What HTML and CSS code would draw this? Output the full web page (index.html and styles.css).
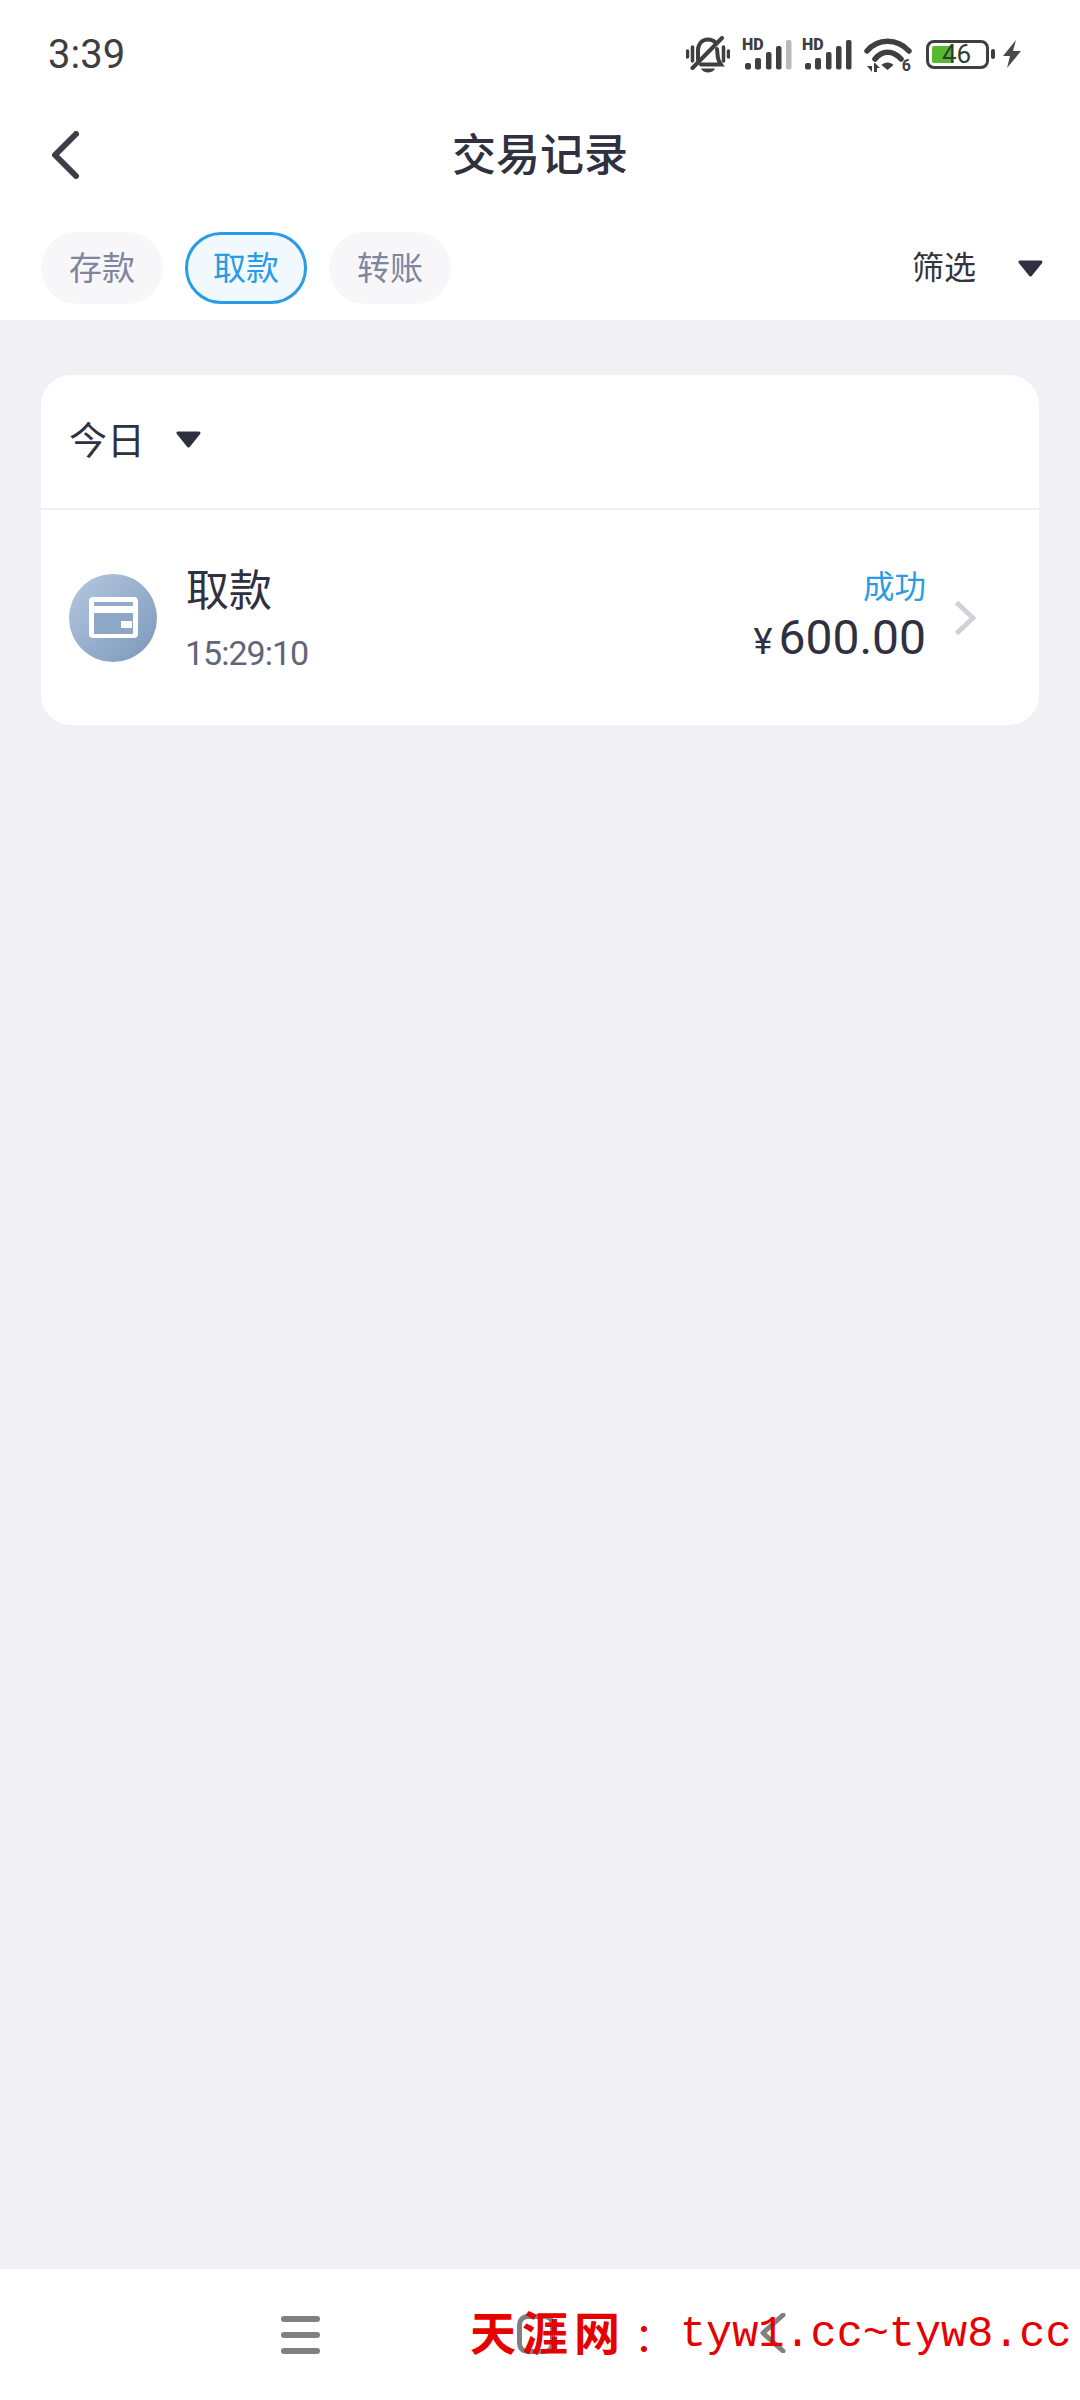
FILE: index.html
```html
<!DOCTYPE html>
<html lang="zh-CN">
<head>
    <meta charset="UTF-8">
    <meta name="viewport" content="width=device-width, initial-scale=1.0">
    <title>交易记录</title>
    <link rel="stylesheet" href="styles.css">
</head>
<body>
    <div class="page">
        <div class="status-bar">
            <span class="clock">3:39</span>
            <div class="status-icons">
                <svg class="ic-bell" width="44" height="37" viewBox="0 0 44 37">
                    <g fill="none" stroke="#3f3f3f" stroke-linecap="round">
                        <path d="M1.500 15v6M6.500 11v14M42.500 15v6M37.500 11v14" stroke-width="3.500"/>
                        <path d="M12 24V14C12 8 16 3.500 22 3.500c3 0 5.500 1 7.500 3M31 13c.5 3 .5 7 1 9 .5 3 2 5 3 6.500H15" stroke-width="4"/>
                        <path d="M6.500 32 36 2" stroke-width="4"/>
                    </g>
                    <path d="M15 32.500h14c-1 2.500-4 4-7 4s-6-1.500-7-4z" fill="#3f3f3f"/>
                </svg>
                <div class="signal">
                    <span class="hd">HD</span>
                    <svg width="50" height="32" viewBox="0 0 50 32">
                        <g fill="#3f3f3f">
                            <rect x="3" y="25" width="6" height="6.500" rx="2"/>
                            <rect x="13" y="20" width="6" height="11.500" rx="2"/>
                            <rect x="24" y="14" width="5.500" height="17.500" rx="2"/>
                            <rect x="34" y="8" width="5.500" height="23.500" rx="2"/>
                        </g>
                        <rect x="44" y="2" width="5.500" height="29.500" rx="2" fill="#b9b9b9"/>
                    </svg>
                </div>
                <div class="signal">
                    <span class="hd">HD</span>
                    <svg width="50" height="32" viewBox="0 0 50 32">
                        <g fill="#3f3f3f">
                            <rect x="3" y="25" width="6" height="6.500" rx="2"/>
                            <rect x="13" y="20" width="6" height="11.500" rx="2"/>
                            <rect x="24" y="14" width="5.500" height="17.500" rx="2"/>
                            <rect x="34" y="8" width="5.500" height="23.500" rx="2"/>
                            <rect x="44" y="2" width="5.500" height="29.500" rx="2"/>
                        </g>
                    </svg>
                </div>
                <div class="wifi">
                    <svg width="48" height="35" viewBox="0 0 48 35">
                        <g fill="none" stroke="#3f3f3f" stroke-width="5.500" stroke-linecap="round">
                            <path d="M3 14C14 1 33 1 45 14"/>
                            <path d="M11 22C18 13 29 13 37 22"/>
                        </g>
                        <path d="M17.500 28c3-3.500 9-3.500 12 0l-6 5z" fill="#3f3f3f"/>
                        <path d="M2 29h6v-3l0 9-5-6zM11 26l5 5h-3v4h-3v-9z" fill="#3f3f3f"/>
                    </svg>
                    <span class="wifi-six">6</span>
                </div>
                <div class="battery">
                    <div class="battery-box">
                        <div class="battery-fill"></div>
                        <span class="battery-num">46</span>
                    </div>
                    <div class="battery-nub"></div>
                </div>
                <svg class="ic-bolt" width="18" height="28" viewBox="0 0 18 28">
                    <path d="M13 0 0 16h7L4 28 18 11h-8z" fill="#4a4a4a"/>
                </svg>
            </div>
        </div>

        <div class="nav-bar">
            <svg class="back" width="28" height="48" viewBox="0 0 28 48">
                <path d="M25 3 4 24l21 21" fill="none" stroke="#3b3e49" stroke-width="6" stroke-linecap="round" stroke-linejoin="round"/>
            </svg>
            <h1 class="nav-title">交易记录</h1>
        </div>

        <div class="tabs">
            <span class="tab">存款</span>
            <span class="tab tab-active">取款</span>
            <span class="tab">转账</span>
            <div class="filter">
                <span>筛选</span>
                <svg class="caret" width="25" height="17" viewBox="0 0 25 17">
                    <path d="M2 2h21l-10.500 13z" fill="#2f3040" stroke="#2f3040" stroke-width="3" stroke-linejoin="round"/>
                </svg>
            </div>
        </div>

        <div class="content">
            <div class="card">
                <div class="card-head">
                    <span>今日</span>
                    <svg class="caret" width="25" height="17" viewBox="0 0 25 17">
                        <path d="M2 2h21l-10.500 13z" fill="#2f3040" stroke="#2f3040" stroke-width="3" stroke-linejoin="round"/>
                    </svg>
                </div>
                <div class="record">
                    <div class="avatar">
                        <svg width="49" height="41" viewBox="0 0 49 41">
                            <rect width="49" height="41" rx="4" fill="#fff"/>
                            <rect x="5" y="5" width="39" height="4" fill="#93abc9"/>
                            <rect x="5" y="16" width="39" height="21" fill="#8ea7c7"/>
                            <rect x="32" y="24" width="11" height="7" fill="#fff"/>
                        </svg>
                    </div>
                    <div class="record-info">
                        <div class="record-name">取款</div>
                        <div class="record-time">15:29:10</div>
                    </div>
                    <div class="record-right">
                        <div class="record-state">成功</div>
                        <div class="record-amount"><span class="yen">¥</span>600.00</div>
                    </div>
                    <svg class="chevron" width="22" height="36" viewBox="0 0 22 36">
                        <path d="M2.500 2.500 19 18 2.500 33.500" fill="none" stroke="#d0d1dc" stroke-width="5"/>
                    </svg>
                </div>
            </div>
        </div>

        <div class="bottom-nav">
            <svg class="nav-menu" width="40" height="38" viewBox="0 0 40 38">
                <g fill="#808080">
                    <rect x="0" y="0" width="39" height="6" rx="3"/>
                    <rect x="0" y="16" width="39" height="6" rx="3"/>
                    <rect x="0" y="32" width="39" height="6" rx="3"/>
                </g>
            </svg>
            <svg class="nav-home" width="38" height="40" viewBox="0 0 38 40">
                <rect x="2.500" y="2.500" width="33" height="35" rx="8" fill="none" stroke="#808080" stroke-width="5"/>
            </svg>
            <svg class="nav-return" width="26" height="40" viewBox="0 0 26 40">
                <path d="M23 2 3 20l20 18" fill="none" stroke="#808080" stroke-width="5" stroke-linecap="round" stroke-linejoin="round"/>
            </svg>
        </div>

        <div class="watermark"><b>天涯网</b><i>：</i><span>tyw1.cc~tyw8.cc</span></div>
    </div>
</body>
</html>
```

FILE: styles.css
```css
* {
    box-sizing: border-box;
}
body {
    margin: 0;
    background-color: #fff;
    font-family: "Noto Sans CJK SC", Roboto, sans-serif;
    color: #2f3040;
}
.page {
    position: relative;
    width: 1080px;
    height: 2400px;
    display: flex;
    flex-direction: column;
    overflow: hidden;
}

/* status bar */
.status-bar {
    height: 108px;
    flex: none;
    display: flex;
    align-items: center;
    justify-content: space-between;
    padding: 0 59px 0 48px;
}
.clock {
    font-family: Roboto, sans-serif;
    font-size: 40px;
    color: #3f3f3f;
}
.status-icons {
    display: flex;
    align-items: center;
}
.status-icons svg {
    display: block;
}
.ic-bell {
    margin-right: 12px;
}
.signal {
    position: relative;
    margin-right: 10px;
}
.hd {
    position: absolute;
    left: 0;
    top: 0;
    font-family: Roboto, sans-serif;
    font-size: 16px;
    font-weight: 900;
    line-height: 13px;
    color: #3f3f3f;
}
.wifi {
    position: relative;
    margin-left: 2px;
    margin-right: 14px;
}
.wifi-six {
    position: absolute;
    right: 1px;
    bottom: 0;
    font-family: Roboto, sans-serif;
    font-size: 16px;
    font-weight: 700;
    line-height: 13px;
    color: #3f3f3f;
}
.battery {
    display: flex;
    align-items: center;
    margin-right: 8px;
}
.battery-box {
    position: relative;
    width: 63px;
    height: 29px;
    border: 3px solid #3f3f3f;
    border-radius: 8px;
    padding: 3px;
}
.battery-fill {
    width: 21px;
    height: 100%;
    background-color: #58b832;
    border-radius: 2px;
}
.battery-num {
    position: absolute;
    left: 13px;
    top: 0;
    font-family: Roboto, sans-serif;
    font-size: 26px;
    line-height: 23px;
    color: #2f3f2f;
}
.battery-nub {
    width: 4px;
    height: 10px;
    margin-left: 2px;
    background-color: #3f3f3f;
    border-radius: 2px;
}

/* title */
.nav-bar {
    position: relative;
    height: 94px;
    flex: none;
    display: flex;
    align-items: center;
    justify-content: center;
}
.back {
    position: absolute;
    left: 51px;
    top: 23px;
}
.nav-title {
    margin: 0 0 6px;
    font-size: 44px;
    font-weight: 500;
    line-height: 60px;
    color: #2f3040;
}

/* tabs */
.tabs {
    height: 118px;
    flex: none;
    display: flex;
    align-items: flex-start;
    padding: 30px 37px 0 41px;
}
.tab {
    width: 122px;
    height: 72px;
    margin-right: 22px;
    padding-bottom: 5px;
    display: flex;
    align-items: center;
    justify-content: center;
    background-color: #f7f7f9;
    border-radius: 36px;
    font-size: 33px;
    color: #80859f;
}
.tab-active {
    background-color: #f2f9fe;
    border: 3px solid #2a9be5;
    color: #2a9be5;
}
.filter {
    margin-left: auto;
    height: 72px;
    display: flex;
    align-items: center;
    font-size: 32px;
    color: #33343f;
}
.filter span {
    margin-bottom: 6px;
}
.filter .caret {
    margin-left: 42px;
}

/* list */
.content {
    flex: 1;
    background-color: #f0f0f5;
    padding: 55px 41px 0;
}
.card {
    background-color: #fff;
    border-radius: 30px;
}
.card-head {
    height: 135px;
    display: flex;
    align-items: center;
    padding: 0 0 4px 28px;
    border-bottom: 2px solid #f0f0f3;
    font-size: 38px;
}
.card-head span {
    margin-bottom: 4px;
}
.card-head .caret {
    margin-left: 31px;
}
.record {
    height: 215px;
    display: flex;
    align-items: center;
    padding: 0 63px 0 28px;
}
.avatar {
    width: 88px;
    height: 88px;
    flex: none;
    display: flex;
    align-items: center;
    justify-content: center;
    border-radius: 50%;
    background: linear-gradient(135deg, #b6c8e0, #7a97ba);
}
.record-info {
    margin-left: 29px;
    margin-bottom: 5px;
}
.record-name {
    font-size: 43px;
    line-height: 58px;
    color: #2f3040;
}
.record-time {
    margin-top: 17px;
    margin-left: -1px;
    font-family: Roboto, sans-serif;
    font-size: 34px;
    letter-spacing: -1px;
    line-height: 40px;
    color: #62657a;
}
.record-right {
    margin-left: auto;
    margin-bottom: 3px;
    text-align: right;
}
.record-state {
    margin-bottom: 5px;
    font-size: 31.500px;
    line-height: 42px;
    color: #2a9be5;
}
.record-amount {
    font-family: Roboto, sans-serif;
    font-size: 48px;
    line-height: 56px;
    color: #2f3040;
}
.yen {
    margin-right: 6px;
    font-size: 36px;
}
.chevron {
    margin-left: 28px;
}

/* bottom nav */
.bottom-nav {
    position: relative;
    height: 131px;
    flex: none;
    background-color: #fff;
}
.nav-menu {
    position: absolute;
    left: 281px;
    top: 47px;
}
.nav-home {
    position: absolute;
    left: 517px;
    top: 45px;
}
.nav-return {
    position: absolute;
    left: 760px;
    top: 44px;
}

/* red text laid over the bottom nav */
.watermark {
    position: absolute;
    left: 470px;
    top: 2306px;
    display: flex;
    align-items: center;
    height: 56px;
    font-family: "Liberation Mono", monospace;
    font-size: 43.500px;
    color: #e60000;
    white-space: nowrap;
}
.watermark b {
    margin-bottom: 8px;
    font-family: "Noto Sans CJK SC", sans-serif;
    font-size: 46px;
    font-weight: 700;
    letter-spacing: 6px;
}
.watermark i {
    flex: none;
    width: 54px;
    padding-left: 8px;
    font-family: "Noto Sans CJK SC", sans-serif;
    font-style: normal;
    font-size: 40px;
}
```
